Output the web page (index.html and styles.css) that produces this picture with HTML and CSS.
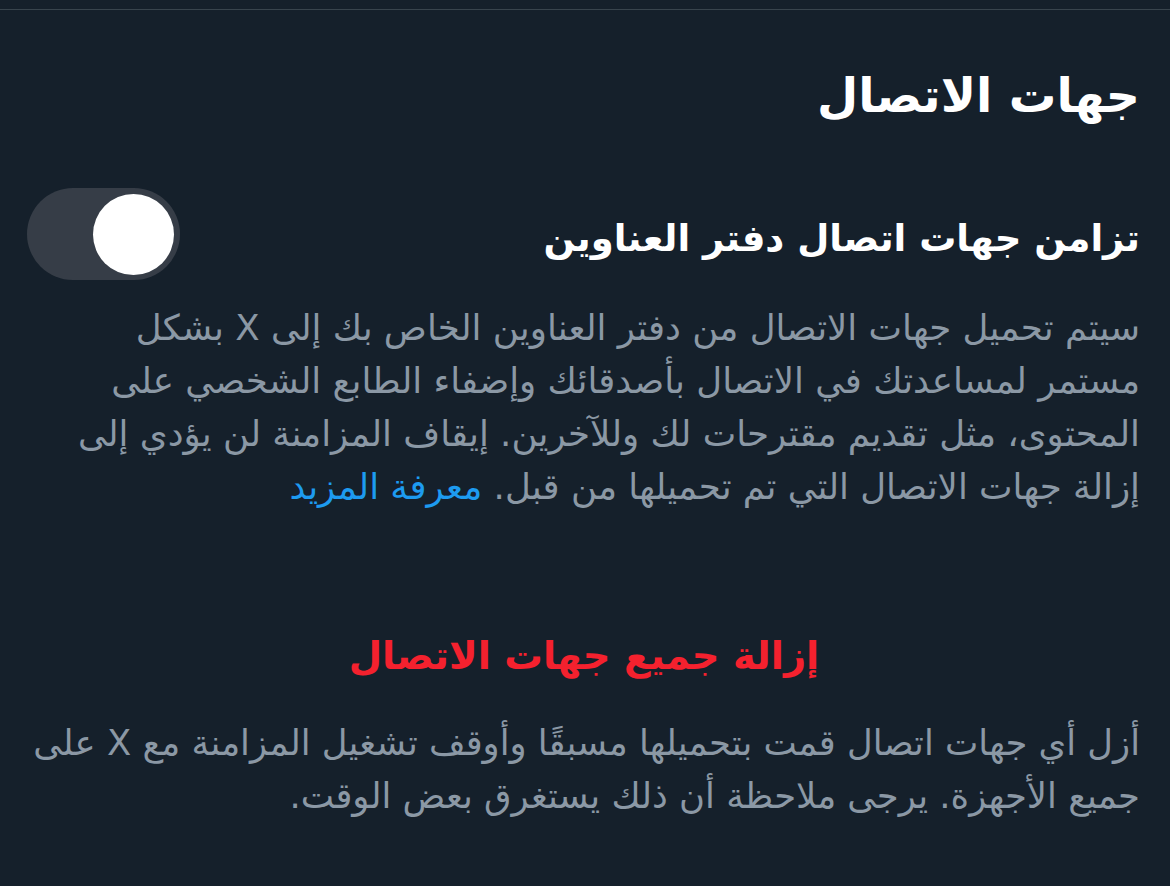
FILE: index.html
```html
<!DOCTYPE html>
<html lang="ar" dir="rtl">
<head>
<meta charset="utf-8">
<link rel="stylesheet" href="styles.css">
</head>
<body>
<div class="topline"></div>
<main class="page">
  <h1 class="title">جهات الاتصال</h1>
  <section class="sync">
    <div class="sync-row">
      <h2 class="sync-label">تزامن جهات اتصال دفتر العناوين</h2>
      <div class="toggle"><span class="knob"></span></div>
    </div>
    <p class="desc">سيتم تحميل جهات الاتصال من دفتر العناوين الخاص بك إلى X بشكل<br>مستمر لمساعدتك في الاتصال بأصدقائك وإضفاء الطابع الشخصي على<br>المحتوى، مثل تقديم مقترحات لك وللآخرين. إيقاف المزامنة لن يؤدي إلى<br>إزالة جهات الاتصال التي تم تحميلها من قبل. <a class="link" href="#">معرفة المزيد</a></p>
  </section>
  <section class="remove">
    <div class="remove-btn">إزالة جميع جهات الاتصال</div>
    <p class="desc desc-wide">أزل أي جهات اتصال قمت بتحميلها مسبقًا وأوقف تشغيل المزامنة مع X على<br>جميع الأجهزة. يرجى ملاحظة أن ذلك يستغرق بعض الوقت.</p>
  </section>
</main>
</body>
</html>
```
FILE: styles.css
```css
html, body {
  margin: 0;
  padding: 0;
  background: #15202b;
  height: 100%;
}
body {
  font-family: "DejaVu Sans", "Noto Sans", sans-serif;
  color: #ffffff;
  overflow: hidden;
}
.topline {
  height: 9px;
  border-bottom: 1px solid #38444d;
}
.page {
  padding: 0 30px 0 30px;
}
.title {
  margin: 0;
  padding-top: 54px;
  font-size: 47.5px;
  line-height: 64px;
  font-weight: bold;
}
.sync {
  margin-top: 60px;
}
.sync-row {
  display: flex;
  align-items: center;
  justify-content: space-between;
}
.sync-label {
  margin: 10px 0 0 0;
  font-size: 37px;
  font-weight: bold;
  line-height: 50px;
}
.toggle {
  width: 153px;
  height: 92px;
  border-radius: 46px;
  background: #363d47;
  display: flex;
  align-items: center;
  justify-content: flex-start;
  padding: 0 6px;
  box-sizing: border-box;
  margin-left: -3px;
}
.knob {
  width: 81px;
  height: 81px;
  border-radius: 50%;
  background: #ffffff;
}
.desc {
  margin: 21px 0 0 0;
  font-size: 35.6px;
  line-height: 53px;
  color: #8b98a5;
}
.link {
  color: #1d9bf0;
  text-decoration: none;
}
.remove {
  margin-top: 118px;
}
.remove-btn {
  text-align: center;
  color: #f4212e;
  font-size: 38.5px;
  font-weight: bold;
  line-height: 50px;
  padding-right: 2px;
}
.desc-wide {
  margin-top: 35px;
  font-size: 35.4px;
}
```
